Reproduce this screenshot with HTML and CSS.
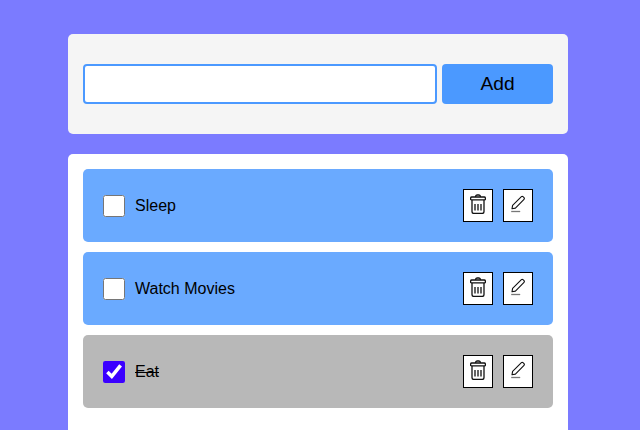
FILE: index.html
```html
<!DOCTYPE html>
<html lang="en">
<head>
<meta charset="utf-8">
<title>Todo List</title>
<link rel="stylesheet" href="styles.css">
</head>
<body>
<svg width="0" height="0" class="sprite">
  <symbol id="trash" viewBox="0 0 16 20">
    <path d="M2 6v11.5q0 2 2 2h8q2 0 2-2V6M.6 5V4.200q0-1.200 1.200-1.200h12.400q1.200 0 1.200 1.200V5q0 .8-.8.8H1.400Q.6 5.800.6 5zM5.400 3q.2-2 1.600-2h2q1.400 0 1.600 2M5 10v6.500M8 10v6.500M11 10v6.500"/>
  </symbol>
  <symbol id="pencil" viewBox="0 0 16 20">
    <path class="thin" d="M2 14.800l.6-3.500 8.800-8.600q.8-.8 1.600 0l1 1q.8.800 0 1.600l-8.600 8.800z"/>
    <path class="line" d="M1.200 17.500h9"/>
  </symbol>
</svg>
<main class="app">
  <form class="panel entry">
    <input class="field" type="text" aria-label="New task">
    <button class="add" type="button">Add</button>
  </form>
  <ul class="panel list">
    <li class="task">
      <label class="name"><input class="check" type="checkbox"><span>Sleep</span></label>
      <button class="action" type="button" aria-label="Delete"><svg class="icon"><use href="#trash"/></svg></button>
      <button class="action" type="button" aria-label="Edit"><svg class="icon"><use href="#pencil"/></svg></button>
    </li>
    <li class="task">
      <label class="name"><input class="check" type="checkbox"><span>Watch Movies</span></label>
      <button class="action" type="button" aria-label="Delete"><svg class="icon"><use href="#trash"/></svg></button>
      <button class="action" type="button" aria-label="Edit"><svg class="icon"><use href="#pencil"/></svg></button>
    </li>
    <li class="task done">
      <label class="name"><input class="check" type="checkbox" checked><span>Eat</span></label>
      <button class="action" type="button" aria-label="Delete"><svg class="icon"><use href="#trash"/></svg></button>
      <button class="action" type="button" aria-label="Edit"><svg class="icon"><use href="#pencil"/></svg></button>
    </li>
  </ul>
</main>
</body>
</html>
```
FILE: styles.css
```css
* {
  box-sizing: border-box;
  margin: 0;
  padding: 0;
}

body {
  height: 100vh;
  background: #7b7bff;
  color: #000;
  font: 16px "Liberation Sans", Arial, sans-serif;
}

.sprite {
  display: none;
}

.app {
  display: flex;
  flex-direction: column;
  gap: 20px;
  width: 568px;
  height: 100vh;
  padding: 34px 0 0 68px;
}

.panel {
  padding: 15px;
  border-radius: 5px;
}

.entry {
  display: flex;
  flex: none;
  align-items: center;
  gap: 5px;
  height: 100px;
  background: #f5f5f5;
}

.field {
  width: 354px;
  height: 40px;
  border: 2px solid #4b99ff;
  border-radius: 4px;
  background: #fff;
}

.add {
  flex: 1;
  height: 40px;
  border: 0;
  border-radius: 4px;
  background: #4b99ff;
  color: #000;
  font: 19.2px "Liberation Sans", Arial, sans-serif;
}

.list {
  display: flex;
  flex: 1;
  flex-direction: column;
  gap: 10px;
  border-radius: 5px 5px 0 0;
  background: #fff;
  list-style: none;
}

.task {
  display: flex;
  flex: none;
  align-items: center;
  gap: 10px;
  padding: 20px;
  border-radius: 5px;
  background: #6aaaff;
}

.done {
  background: #b8b8b8;
}

.name {
  display: flex;
  flex: 1;
  align-items: center;
  gap: 10px;
}

.done span {
  text-decoration: line-through;
}

.check {
  width: 22px;
  height: 22px;
  accent-color: #3b00ff;
}

.action {
  display: flex;
  justify-content: center;
  width: 30px;
  height: 33px;
  padding-top: 4px;
  border: 1px solid #000;
  background: #fff;
}

.icon {
  width: 16px;
  height: 20px;
  fill: none;
  stroke: #111;
  stroke-width: 1.3;
  stroke-linejoin: round;
}

.thin {
  stroke-width: 1.1;
}

.line {
  stroke: #777;
}
```
